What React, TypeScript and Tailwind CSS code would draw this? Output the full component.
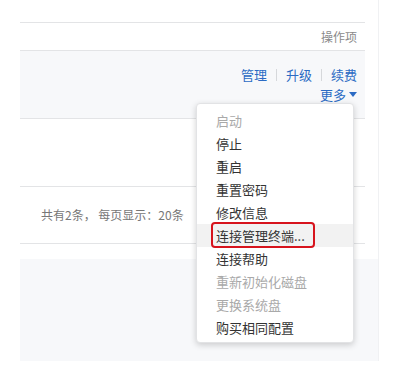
import { useState } from "react";

const menu = [
  { label: "启动", disabled: true },
  { label: "停止" },
  { label: "重启" },
  { label: "重置密码" },
  { label: "修改信息" },
  { label: "连接管理终端...", active: true },
  { label: "连接帮助" },
  { label: "重新初始化磁盘", disabled: true },
  { label: "更换系统盘", disabled: true },
  { label: "购买相同配置" },
];

const Caret = () => (
  <svg width="8" height="5" viewBox="0 0 8 5" className="ml-[3px] inline-block">
    <path d="M0 0h8L4 5z" fill="#2b6bc4" />
  </svg>
);

export default function App() {
  const [open] = useState(true);

  return (
    <div
      className="relative h-[383px] w-[397px] overflow-hidden bg-white text-[13px] text-[#333]"
      style={{ fontFamily: '"Noto Sans CJK SC", "Noto Sans", sans-serif' }}
    >
      <div className="ml-[20px] w-[359px] border-r border-[#f0f1f3] pt-[22px]">
        <div className="w-[345px]">
          <div className="flex h-[29px] items-center justify-end border-y border-[#e3e4e6] pr-[8px] text-[12px] text-[#8a8a8a]">
            操作项
          </div>
          <div className="flex h-[68px] flex-col items-end justify-center border-b border-[#e3e4e6] bg-[#f7f8fa] pr-[8px] text-[#2b6bc4]">
            <div className="flex items-center leading-[20px]">
              <span>管理</span>
              <span className="mx-[9px] h-[12px] w-px bg-[#d6d8db]" />
              <span>升级</span>
              <span className="mx-[9px] h-[12px] w-px bg-[#d6d8db]" />
              <span>续费</span>
            </div>
            <div className="flex items-center leading-[20px]">
              更多
              <Caret />
            </div>
          </div>
          <div className="h-[68px] border-b border-[#e3e4e6]" />
          <div className="flex h-[57px] items-center border-b border-[#e3e4e6] pl-[21px] text-[12px] text-[#777]">
            共有2条， 每页显示：20条
          </div>
        </div>
        <div className="mt-[15px] h-[102px] bg-[#f7f8fa]" />
      </div>

      {open && (
        <div className="absolute left-[196px] top-[103px] w-[158px] rounded-[4px] border border-[#e2e3e5] bg-white pb-[3px] pt-[5px] shadow-[0_2px_6px_rgba(0,0,0,0.18)]">
          {menu.map((item) => (
            <div
              key={item.label}
              className={`relative flex h-[23px] items-center pl-[19px] ${
                item.active ? "bg-[#f2f2f2]" : ""
              } ${item.disabled ? "text-[#a9a9a9]" : "text-[#333]"}`}
            >
              {item.label}
              {item.active && (
                <span className="absolute left-[14px] top-[-2px] h-[26px] w-[104px] rounded-[4px] border-2 border-[#d7141d]" />
              )}
            </div>
          ))}
        </div>
      )}
    </div>
  );
}
